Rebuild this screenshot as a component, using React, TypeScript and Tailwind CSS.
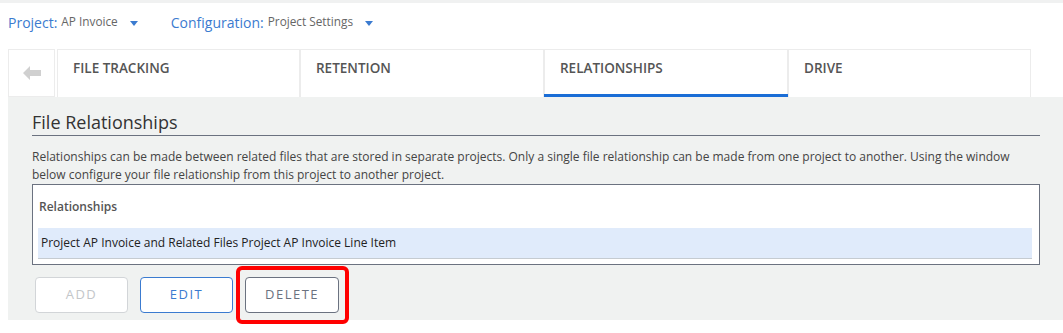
import React from "react";

const Caret = () => (
  <svg width="8" height="5" viewBox="0 0 8 5" className="ml-[12px] mt-[2px]">
    <path d="M0 0 L8 0 L4 5 Z" fill="#3b7bd0" />
  </svg>
);

const BackArrow = () => (
  <svg width="18" height="14" viewBox="0 0 18 14">
    <path d="M0 7 L7 0 L7 4 L18 4 L18 10 L7 10 L7 14 Z" fill="#d0d0d0" />
  </svg>
);

export default function App() {
  const tabs = [
    { label: "FILE TRACKING", w: "w-[243px]" },
    { label: "RETENTION", w: "w-[244px]" },
    { label: "RELATIONSHIPS", w: "w-[244px]", active: true },
    { label: "DRIVE", w: "w-[243px]" },
  ];
  return (
    <div
      className="w-[1063px] h-[333px] bg-white overflow-hidden"
      style={{ fontFamily: '"Open Sans", sans-serif' }}
    >
      <div className="h-[3px] bg-[#f0f1f1]" />
      <div className="h-[46px] flex items-start pt-[9px] pl-[8px]">
        <div className="flex items-center h-[20px]">
          <span className="text-[14px] text-[#3b7bd0]">Project:</span>
          <span className="text-[11.8px] text-[#666] ml-[4px]">AP Invoice</span>
          <Caret />
        </div>
        <div className="flex items-center h-[20px] ml-[33px]">
          <span className="text-[14px] text-[#3b7bd0]">Configuration:</span>
          <span className="text-[11.8px] text-[#666] ml-[4px]">Project Settings</span>
          <Caret />
        </div>
      </div>
      <div className="flex pl-[8px] h-[48px]">
        <div className="w-[47px] h-[48px] border border-[#ececec] flex items-center justify-center">
          <BackArrow />
        </div>
        <div className="w-[2px]" />
        {tabs.map((t) => (
          <div
            key={t.label}
            className={`${t.w} h-[48px] border-t border-l border-r border-[#ececec] relative flex items-start pt-[8px] pl-[15px] bg-white`}
          >
            <span className="text-[13.5px] font-semibold text-[#555]">{t.label}</span>
            {t.active && (
              <div className="absolute left-[-1px] right-[-1px] bottom-0 h-[3px] bg-[#1a6dd6]" />
            )}
          </div>
        ))}
      </div>
      <div className="ml-[8px] bg-[#f0f2f1] h-[223px] pl-[24px] pr-[23px] pt-[13px]">
        <div className="h-[26px] border-b border-[#6b7280] text-[18px] leading-[25px] text-[#333]">
          File Relationships
        </div>
        <p className="mt-[12px] text-[12px] leading-[18px] text-[#444]">
          Relationships can be made between related files that are stored in separate projects. Only a single file relationship can be made from one project to another. Using the window below configure your file relationship from this project to another project.
        </p>
        <div className="border border-[#6b7280] bg-white pl-[5px] pr-[7px] pb-[5px]">
          <div className="h-[43px] flex items-center pl-[1px] text-[12px] font-semibold text-[#555]">
            Relationships
          </div>
          <div className="h-[31px] bg-[#e0ebfb] border-b border-[#c5cbd1] flex items-center pl-[3px] text-[12px] text-[#222]">
            Project AP Invoice and Related Files Project AP Invoice Line Item
          </div>
        </div>
        <div className="flex gap-[12px] mt-[12px] pl-[3px]">
          <button className="w-[93px] h-[36px] rounded-[4px] border border-[#d2d5d8] bg-white text-[13px] tracking-[1.5px] text-[#c3c6c9]">
            ADD
          </button>
          <button className="w-[93px] h-[36px] rounded-[4px] border border-[#3b7bd0] bg-white text-[13px] tracking-[1.5px] text-[#3b7bd0]">
            EDIT
          </button>
          <div className="relative">
            <button className="w-[94px] h-[36px] rounded-[4px] border border-[#6b7280] bg-white text-[13px] tracking-[1.5px] text-[#6b7280]">
              DELETE
            </button>
            <div className="absolute left-[-9px] top-[-11px] w-[113px] h-[58px] border-[4px] border-[#ff0000] rounded-[6px]" />
          </div>
        </div>
      </div>
    </div>
  );
}
